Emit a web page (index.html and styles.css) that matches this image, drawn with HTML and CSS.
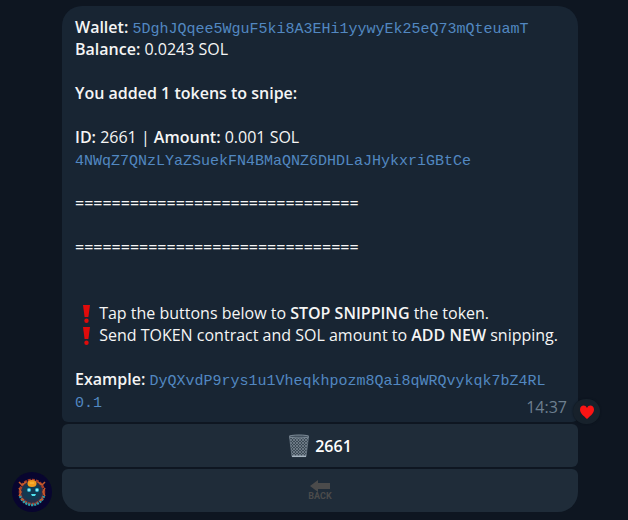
FILE: index.html
```html
<!DOCTYPE html>
<html lang="en">
<head>
<meta charset="utf-8">
<title>Snipe bot chat</title>
<link rel="stylesheet" href="styles.css">
</head>
<body>
<svg class="defs" aria-hidden="true">
  <symbol id="bang" viewBox="0 0 20 20">
    <path d="M8 1h7l-1.600 12h-3.800z" fill="#e00b0b"/>
    <circle cx="11.500" cy="16.800" r="2.200" fill="#e00b0b"/>
  </symbol>
</svg>
<main class="chat">
  <svg class="avatar" viewBox="0 0 40 40" role="img" aria-label="Bot avatar">
    <circle cx="20" cy="20" r="20" fill="#08052f"/>
    <circle cx="20" cy="20" r="12" fill="#24304a"/>
    <circle cx="20" cy="20" r="12" fill="none" stroke="#a83c28" stroke-width="2.500" stroke-dasharray="3 1"/>
    <path d="M8 24c2 5 6 9 12 9s10-4 12-9" fill="none" stroke="#2ba0ad" stroke-width="2.500" stroke-dasharray="2 1"/>
    <path d="M7 10l3 3 4-3M33 10l-3 3-4-3M7 16l2 4-2 4M33 16l-2 4 2 4M9 27l3 1M31 27l-3 1" fill="none" stroke="#c65b2b" stroke-width="1.500"/>
    <path d="M11 19c0-5 4-7 9-7s9 2 9 7c0 6-4 9-9 9s-9-3-9-9z" fill="#123951"/>
    <ellipse cx="20" cy="11.500" rx="4.500" ry="3.500" fill="#f29a1d"/>
    <path d="M18 11h4" stroke="#ffc345"/>
    <circle cx="17" cy="18" r="2" fill="#35bfd8"/>
    <circle cx="25" cy="18" r="2" fill="#35bfd8"/>
    <circle cx="17" cy="18" r="1" fill="#b3f5ff"/>
    <circle cx="25" cy="18" r="1" fill="#b3f5ff"/>
    <path d="M19 22h5l-1 2h-3z" fill="#4ee2ee"/>
  </svg>
  <article class="message">
    <div class="bubble">
      <p><b>Wallet:</b> <code>5DghJQqee5WguF5ki8A3EHi1yywyEk25eQ73mQteuamT</code><br><b>Balance:</b> 0.0243 SOL</p>
      <p><b>You added 1 tokens to snipe:</b></p>
      <p><b>ID:</b> 2661 | <b>Amount:</b> 0.001 SOL<br><code>4NWqZ7QNzLYaZSuekFN4BMaQNZ6DHDLaJHykxriGBtCe</code></p>
      <p>===============================</p>
      <p class="last-rule">===============================</p>
      <p><svg class="emoji"><use href="#bang"/></svg> Tap the buttons below to <b>STOP SNIPPING</b> the token.<br><svg class="emoji"><use href="#bang"/></svg> Send TOKEN contract and SOL amount to <b>ADD NEW</b> snipping.</p>
      <p><b>Example:</b> <code>DyQXvdP9rys1u1Vheqkhpozm8Qai8qWRQvykqk7bZ4RL<br>0.1</code></p>
      <time class="time">14:37</time>
      <button class="reaction" type="button" aria-label="React with heart">
        <svg class="heart" viewBox="0 0 16 16"><path d="M8 15C5 12 1 9.500 1 5.500 1 1 6.500 0 8 4c1.500-4 7-3 7 1.500C15 9.500 11 12 8 15z" fill="#fb1414"/></svg>
      </button>
    </div>
    <button class="key" type="button">
      <svg class="bin" viewBox="0 0 22 24" aria-hidden="true">
        <defs>
          <pattern id="mesh" width="3" height="3" patternUnits="userSpaceOnUse">
            <path d="M0 0l3 3M3 0L0 3" stroke="#7d8a95" stroke-width=".7"/>
          </pattern>
        </defs>
        <path d="M1.500 3h19L18 22.500H4z" fill="#3c4a56"/>
        <path d="M1.500 3h19L18 22.500H4z" fill="url(#mesh)" stroke="#71808c" stroke-width=".7"/>
        <ellipse cx="11" cy="2.500" rx="10" ry="1.500" fill="#43515e" stroke="#7d8b97"/>
        <path d="M4 22.300h14" stroke="#a6b4c0" stroke-width="1.500"/>
      </svg>
      <span>2661</span>
    </button>
    <button class="key key-last" type="button" aria-label="Back">
      <svg class="back" viewBox="0 0 22 12" aria-hidden="true"><path d="M1 6l8-6v3h12v6H9v3z" fill="#4b4b4b"/></svg>
      <span class="back-label">BACK</span>
    </button>
  </article>
</main>
</body>
</html>
```
FILE: styles.css
```css
* {
  box-sizing: border-box;
}

body {
  margin: 0;
  min-height: 100vh;
  background: #0e1621;
  color: #f5f5f5;
  font: 16px/22px "Open Sans", sans-serif;
}

.defs {
  display: none;
}

.chat {
  display: flex;
  align-items: flex-end;
  gap: 10px;
  padding: 6px 50px 8px 12px;
}

.avatar {
  flex: none;
  width: 40px;
  height: 40px;
}

.message {
  flex: 1;
  min-width: 0;
  display: flex;
  flex-direction: column;
  gap: 2px;
}

.bubble {
  position: relative;
  padding: 10px 12px 10px 13px;
  border-radius: 20px 20px 6px 6px;
  background: #182533;
}

.bubble p {
  margin: 0 0 22px;
}

.bubble .last-rule {
  margin-bottom: 44px;
}

.bubble p:last-of-type {
  margin-bottom: 0;
}

b {
  font-weight: 600;
}

code {
  color: #5288c1;
  font: 15px/16px "Liberation Mono", monospace;
  overflow-wrap: anywhere;
}

.emoji {
  width: 20px;
  height: 20px;
  vertical-align: text-bottom;
}

.time {
  position: absolute;
  right: 11px;
  bottom: 4px;
  color: #6d7f8f;
}

.reaction {
  position: absolute;
  right: -22px;
  bottom: -2px;
  display: grid;
  place-items: center;
  width: 27px;
  height: 25px;
  padding: 0;
  border: 0;
  border-radius: 13px;
  background: #17212b;
  box-shadow: 0 0 2px #0b121b;
}

.heart {
  width: 16px;
  height: 16px;
}

.key {
  display: flex;
  align-items: center;
  justify-content: center;
  gap: 5px;
  height: 43px;
  padding: 0;
  border: 0;
  border-radius: 6px;
  background: #1f2c39;
  color: #fff;
  font: 600 16px/22px "Open Sans", sans-serif;
}

.key-last {
  flex-direction: column;
  gap: 0;
  border-radius: 6px 6px 20px 20px;
}

.bin {
  width: 22px;
  height: 24px;
}

.back {
  width: 22px;
  height: 12px;
}

.back-label {
  color: #4b4b4b;
  font: bold 9px/9px Roboto, sans-serif;
}
```
